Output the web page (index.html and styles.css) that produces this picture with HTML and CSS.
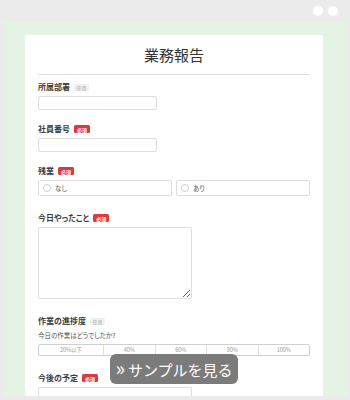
FILE: index.html
```html
<!DOCTYPE html>
<html lang="ja">
<head>
    <meta charset="UTF-8">
    <meta name="viewport" content="width=device-width, initial-scale=1.0">
    <title>業務報告</title>
    <link rel="stylesheet" href="styles.css">
</head>
<body>
    <div class="browser">
        <div class="browser-bar">
            <span class="dot"></span>
            <span class="dot"></span>
        </div>

        <div class="browser-view">
            <form class="card">
                <h1>業務報告</h1>

                <div class="field">
                    <label>所属部署 <span class="badge badge-optional">任意</span></label>
                    <input type="text" class="text-input">
                </div>

                <div class="field">
                    <label>社員番号 <span class="badge badge-required">必須</span></label>
                    <input type="text" class="text-input">
                </div>

                <div class="field">
                    <label>残業 <span class="badge badge-required">必須</span></label>
                    <div class="radio-row">
                        <div class="radio-box"><span class="radio"></span>なし</div>
                        <div class="radio-box"><span class="radio"></span>あり</div>
                    </div>
                </div>

                <div class="field field-loose">
                    <label>今日やったこと <span class="badge badge-required">必須</span></label>
                    <textarea class="text-area"></textarea>
                </div>

                <div class="field">
                    <label>作業の進捗度 <span class="badge badge-optional">任意</span></label>
                    <p class="question">今日の作業はどうでしたか?</p>
                    <div class="scale">
                        <span>20%以下</span>
                        <span>40%</span>
                        <span>60%</span>
                        <span>80%</span>
                        <span>100%</span>
                    </div>
                </div>

                <div class="field field-loose">
                    <label>今後の予定 <span class="badge badge-required">必須</span></label>
                    <textarea class="text-area"></textarea>
                </div>
            </form>
        </div>

        <a class="sample-btn"><span class="arrows">»</span>サンプルを見る</a>
    </div>
</body>
</html>
```

FILE: styles.css
```css
* {
    box-sizing: border-box;
}

body {
    margin: 0;
    font-family: "Noto Sans CJK JP", "Noto Sans", sans-serif;
    background-color: #ebebeb;
}

.browser {
    position: relative;
    width: 350px;
    height: 400px;
    overflow: hidden;
}

.browser-bar {
    height: 22px;
    display: flex;
    justify-content: flex-end;
    align-items: center;
    gap: 5px;
    padding-right: 12px;
}

.dot {
    width: 10px;
    height: 10px;
    border-radius: 50%;
    background: white;
}

.browser-view {
    margin: 0 3px 0 4px;
    height: 374px;
    overflow: hidden;
    padding-top: 13px;
    background-color: #e5f3e4;
}

.card {
    width: 298px;
    margin-left: 21px;
    padding: 10px 13px 20px;
    background: white;
    color: #3c3c3c;
    font-feature-settings: "palt";
}

h1 {
    margin: 0;
    font-size: 15px;
    line-height: 20px;
    font-weight: 400;
    text-align: center;
    color: #333;
    padding-bottom: 9px;
    border-bottom: 1px solid #dcdcdc;
    margin-bottom: 7px;
}

.field + .field {
    margin-top: 14px;
}

.field-loose + .field,
.field + .field-loose {
    margin-top: 17px;
}

label {
    display: flex;
    align-items: center;
    gap: 4px;
    font-size: 8px;
    line-height: 10px;
    font-weight: 700;
    margin-bottom: 4px;
}

.badge {
    display: inline-block;
    font-size: 5px;
    line-height: 1;
    border-radius: 1.5px;
}

.badge-optional {
    padding: 1px 2.5px;
    background: #f0f0f0;
    color: #aaa;
    font-weight: 400;
}

.badge-required {
    padding: 1.5px 3px;
    background: #dc3a3a;
    color: white;
}

.text-input {
    display: block;
    width: 119px;
    height: 14px;
    margin: 0;
    border: 1px solid #dedede;
    border-radius: 2px;
    background: white;
}

.text-area {
    display: block;
    width: 154px;
    height: 72px;
    margin: 0;
    border: 1px solid #dedede;
    border-radius: 2px;
    background: white;
}

.radio-row {
    display: grid;
    grid-template-columns: 1fr 1fr;
    gap: 4px;
}

.radio-box {
    display: flex;
    align-items: center;
    gap: 4px;
    height: 16px;
    padding-left: 4px;
    border: 1px solid #dedede;
    border-radius: 2px;
    font-size: 6.5px;
    color: #555;
}

.radio {
    width: 8px;
    height: 8px;
    border: 1px solid #cfcfcf;
    border-radius: 50%;
}

.question {
    margin: 0 0 4px;
    font-size: 6.5px;
    line-height: 10px;
    color: #555;
}

.scale {
    display: grid;
    grid-template-columns: 64px repeat(4, 1fr);
    height: 12px;
    border: 1px solid #cfcfcf;
    border-radius: 2px;
}

.scale span {
    display: flex;
    align-items: center;
    justify-content: center;
    font-size: 5.5px;
    color: #999;
}

.scale span + span {
    border-left: 1px solid #dedede;
}

.sample-btn {
    position: absolute;
    left: 110px;
    top: 354px;
    width: 128px;
    height: 30px;
    display: flex;
    align-items: center;
    justify-content: center;
    gap: 3px;
    border-radius: 6px;
    background: #7b7b7b;
    color: white;
    font-size: 15px;
}

.arrows {
    font-size: 20px;
    line-height: 1;
    margin-top: -3px;
}
```
